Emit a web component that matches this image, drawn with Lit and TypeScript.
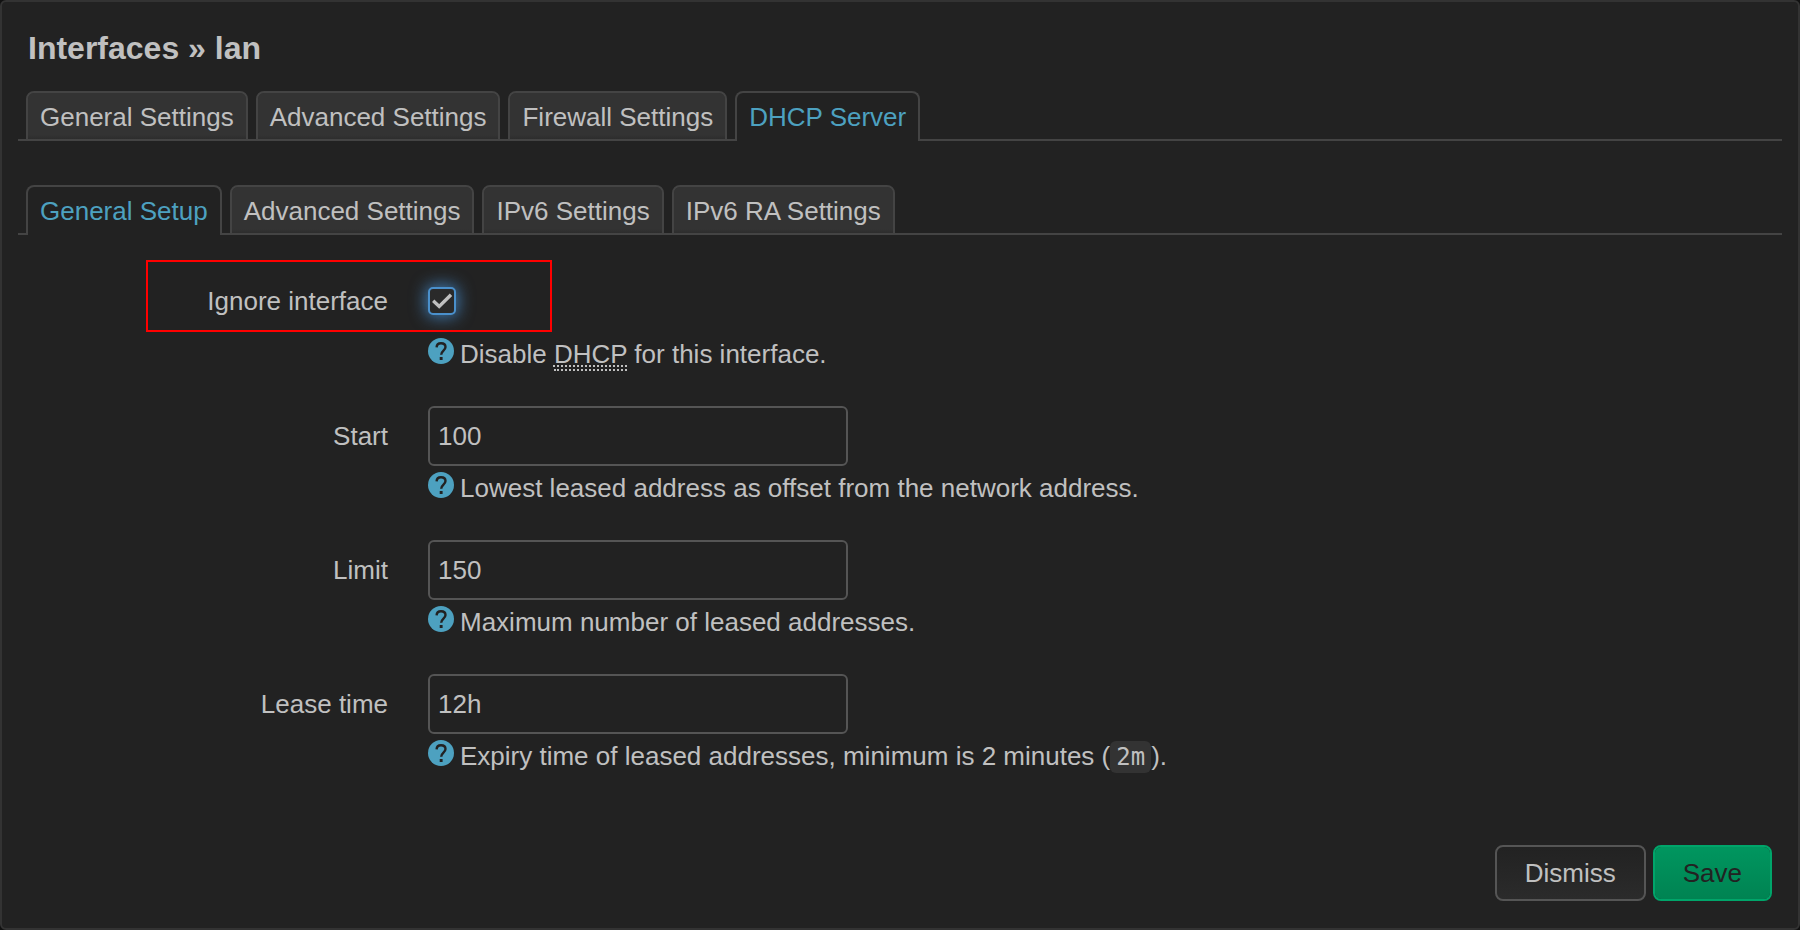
import { LitElement, html, css, TemplateResult } from "lit";
import { customElement, property, state } from "lit/decorators.js";
import { classMap } from "lit/directives/class-map.js";

@customElement("tab-menu")
class TabMenu extends LitElement {
  @property({ attribute: false }) tabs: string[] = [];
  @property({ type: Number }) active = 0;

  static styles = css`
    :host {
      display: block;
    }
    .tabs {
      display: flex;
      gap: 8px;
      margin: 0;
      padding: 0 8px;
      list-style: none;
      box-shadow: inset 0 -2px #444;
    }
    .tab {
      display: block;
      box-sizing: border-box;
      height: 50px;
      padding: 0 12px;
      border: 2px solid #444;
      border-radius: 8px 8px 0 0;
      background: linear-gradient(#333 0 42px, #2d2d2d) padding-box;
      color: #c0c0c0;
      line-height: 48px;
      text-decoration: none;
      white-space: nowrap;
    }
    .active {
      border-bottom-width: 0;
      background: #222;
      color: #4da1c0;
    }
  `;

  render() {
    return html`<ul class="tabs">
      ${this.tabs.map(
        (name, i) => html`<li>
          <a
            href="#"
            class=${classMap({ tab: true, active: i === this.active })}
            @click=${(e: Event) => {
              e.preventDefault();
              this.active = i;
            }}
            >${name}</a
          >
        </li>`
      )}
    </ul>`;
  }
}

interface Field {
  id: string;
  label: string;
  value: string;
  help: TemplateResult;
}

@customElement("app-root")
class AppRoot extends LitElement {
  @state() private ignore = true;

  private fields: Field[] = [
    {
      id: "start",
      label: "Start",
      value: "100",
      help: html`Lowest leased address as offset from the network address.`,
    },
    {
      id: "limit",
      label: "Limit",
      value: "150",
      help: html`Maximum number of leased addresses.`,
    },
    {
      id: "leasetime",
      label: "Lease time",
      value: "12h",
      help: html`Expiry time of leased addresses, minimum is 2 minutes (<code class="code">2m</code>).`,
    },
  ];

  static styles = css`
    :host {
      display: block;
      min-height: 100vh;
      background: #111;
      color: #c0c0c0;
      font: 26px/32px "Helvetica Neue", "Liberation Sans", Arial, sans-serif;
    }
    .modal {
      display: flex;
      flex-direction: column;
      box-sizing: border-box;
      min-height: 100vh;
      padding: 16px;
      border: 2px solid #333;
      border-radius: 6px;
      background: #222;
    }
    .title {
      margin: 10px 10px 23px;
      font-size: 32px;
      line-height: 40px;
    }
    .subtabs {
      margin-top: 44px;
    }
    .form {
      display: grid;
      gap: 36px;
      padding-top: 38px;
    }
    .row {
      position: relative;
      display: grid;
      grid-template-columns: 370px minmax(0, 1fr);
      column-gap: 40px;
    }
    .label {
      text-align: right;
      line-height: 60px;
    }
    .check-label {
      line-height: 56px;
    }
    .marker {
      position: absolute;
      left: 128px;
      top: -13px;
      box-sizing: border-box;
      width: 406px;
      height: 72px;
      border: 2px solid #f00;
      pointer-events: none;
    }
    .check-cell {
      display: flex;
      align-items: center;
      height: 56px;
      margin-bottom: 3px;
    }
    .check {
      appearance: none;
      box-sizing: border-box;
      width: 28px;
      height: 28px;
      margin: 0;
      border: 2px solid #4a90cc;
      border-radius: 5px;
      background: #222;
      box-shadow: 0 0 16px 2px rgba(74, 150, 220, 0.75);
      outline: none;
    }
    .check:checked {
      background: #2a2a2a
        url("data:image/svg+xml,%3Csvg xmlns='http://www.w3.org/2000/svg' viewBox='0 0 24 24'%3E%3Cpath d='M3.2 11.800 9.200 17.400 21 5.800' fill='none' stroke='%23c0c0c0' stroke-width='3.4'/%3E%3C/svg%3E")
        center / 24px 24px no-repeat;
    }
    .text {
      display: block;
      box-sizing: border-box;
      width: 420px;
      max-width: 100%;
      height: 60px;
      padding: 0 8px;
      border: 2px solid #555;
      border-radius: 6px;
      background: #222;
      color: inherit;
      font: inherit;
      outline: none;
    }
    .help {
      display: flex;
      gap: 6px;
      padding-top: 6px;
    }
    .icon {
      flex: none;
      width: 26px;
      height: 26px;
    }
    .abbr {
      border-bottom: 2px dotted #c0c0c0;
      text-decoration: underline dotted 2px;
      text-underline-offset: 2px;
    }
    .code {
      padding: 2px 6px;
      border-radius: 6px;
      background: #333;
      font: 24px/30px "DejaVu Sans Mono", monospace;
    }
    .actions {
      display: flex;
      justify-content: flex-end;
      gap: 7px;
      margin-top: auto;
      padding: 0 10px 11px;
    }
    .btn {
      height: 56px;
      padding: 0 28px;
      border: 2px solid #555;
      border-radius: 8px;
      background: linear-gradient(#222, #2b2b2b) padding-box;
      color: #c0c0c0;
      font: inherit;
    }
    .save {
      border-color: #00a56a;
      background: linear-gradient(#00965f, #008352) padding-box;
      color: #222;
    }
  `;

  private renderHelp(content: TemplateResult) {
    return html`<div class="help">
      <svg class="icon" viewBox="0 0 26 26" aria-hidden="true">
        <circle cx="13" cy="13" r="13" fill="#4da1c0" />
        <path d="M8.600 9.400C8.700 6.600 10.500 5.200 13 5.200c2.600 0 4.500 1.500 4.500 3.900 0 3.500-4.300 3.700-4.300 7.700" fill="none" stroke="#222" stroke-width="2.4" />
        <rect x="11.700" y="19" width="2.900" height="3" fill="#222" />
      </svg>
      <span>${content}</span>
    </div>`;
  }

  render() {
    return html`<main class="modal">
      <h4 class="title">Interfaces » lan</h4>
      <tab-menu
        .tabs=${["General Settings", "Advanced Settings", "Firewall Settings", "DHCP Server"]}
        active="3"
      ></tab-menu>
      <tab-menu
        class="subtabs"
        .tabs=${["General Setup", "Advanced Settings", "IPv6 Settings", "IPv6 RA Settings"]}
        active="0"
      ></tab-menu>
      <div class="form">
        <div class="row">
          <label class="label check-label" for="ignore">Ignore interface</label>
          <div>
            <div class="check-cell">
              <input
                class="check"
                id="ignore"
                type="checkbox"
                .checked=${this.ignore}
                @change=${(e: Event) => (this.ignore = (e.target as HTMLInputElement).checked)}
              />
            </div>
            ${this.renderHelp(
              html`Disable <abbr class="abbr" title="Dynamic Host Configuration Protocol">DHCP</abbr> for this interface.`
            )}
          </div>
          <div class="marker"></div>
        </div>
        ${this.fields.map(
          (f) => html`<div class="row">
            <label class="label" for=${f.id}>${f.label}</label>
            <div>
              <input class="text" id=${f.id} type="text" .value=${f.value} />
              ${this.renderHelp(f.help)}
            </div>
          </div>`
        )}
      </div>
      <div class="actions">
        <button class="btn" type="button">Dismiss</button>
        <button class="btn save" type="button">Save</button>
      </div>
    </main>`;
  }
}
